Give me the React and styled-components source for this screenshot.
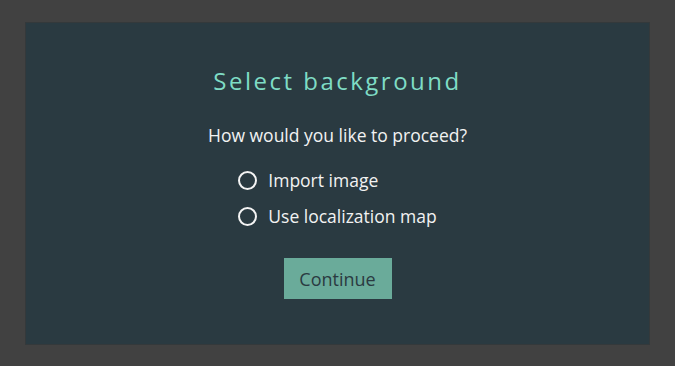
import React, { useState } from "react";
import styled, { createGlobalStyle } from "styled-components";

const Global = createGlobalStyle`
  html, body { margin: 0; padding: 0; background: #414141; }
  body { font-family: "Open Sans", "Noto Sans", sans-serif; }
`;

const Page = styled.div`
  padding: 22px 25px 21px;
  box-sizing: border-box;
  height: 366px;
`;

const Panel = styled.div`
  height: 323px;
  box-sizing: border-box;
  background: #2a3a41;
  border: 1px solid #34393b;
  display: flex;
  flex-direction: column;
  align-items: center;
  padding-top: 42px;
`;

const Title = styled.h1`
  margin: 0;
  font-size: 24px;
  line-height: 32px;
  font-weight: 500;
  letter-spacing: 2.5px;
  color: #7fdcc5;
`;

const Question = styled.p`
  margin: 26px 0 0;
  font-size: 17.5px;
  line-height: 24px;
  color: #f2f2f2;
`;

const Options = styled.div`
  margin-top: 21px;
  display: flex;
  flex-direction: column;
  gap: 12px;
`;

const Option = styled.label`
  display: flex;
  align-items: center;
  gap: 11px;
  height: 24px;
  font-size: 17.5px;
  color: #f2f2f2;
  cursor: pointer;
`;

const Circle = styled.span`
  width: 19px;
  height: 19px;
  box-sizing: border-box;
  border-radius: 50%;
  border: 2px solid #f4f4f4;
  display: flex;
  align-items: center;
  justify-content: center;
  &::after {
    content: "";
    width: 9px;
    height: 9px;
    border-radius: 50%;
    background: ${(p) => (p.$checked ? "#f4f4f4" : "transparent")};
  }
`;

const Button = styled.button`
  margin-top: 30px;
  width: 108px;
  height: 41px;
  border: none;
  background: #6aab9a;
  color: #2a3a41;
  font-family: "Open Sans", "Noto Sans", sans-serif;
  font-size: 18px;
  cursor: pointer;
`;

export default function App() {
  const [choice, setChoice] = useState(null);
  const opts = ["Import image", "Use localization map"];
  return (
    <Page>
      <Global />
      <Panel>
        <Title>Select background</Title>
        <Question>How would you like to proceed?</Question>
        <Options>
          {opts.map((o) => (
            <Option key={o} onClick={() => setChoice(o)}>
              <Circle $checked={choice === o} />
              {o}
            </Option>
          ))}
        </Options>
        <Button>Continue</Button>
      </Panel>
    </Page>
  );
}
